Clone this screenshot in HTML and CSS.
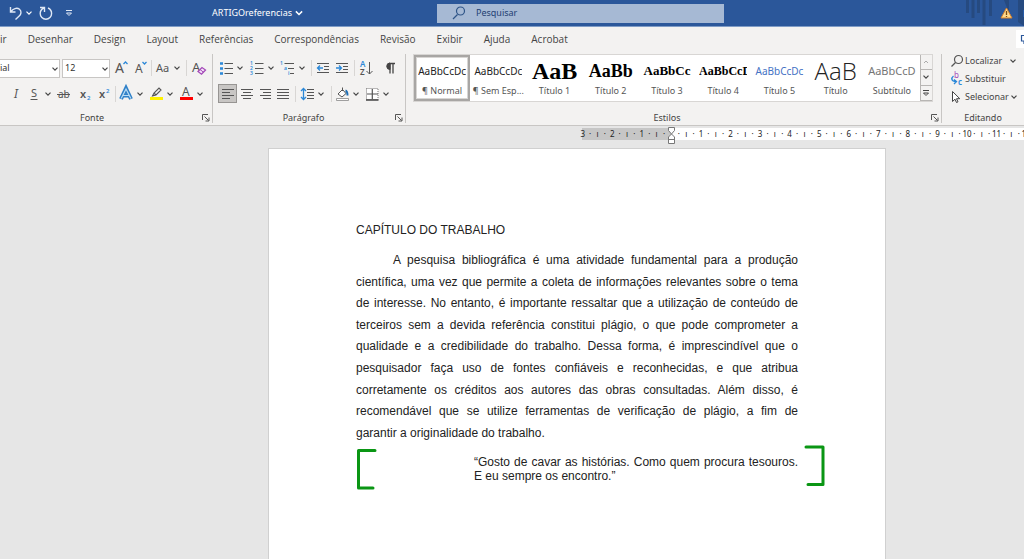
FILE: index.html
```html
<!DOCTYPE html>
<html lang="pt-BR">
<head>
<meta charset="utf-8">
<meta name="viewport" content="width=device-width, initial-scale=1">
<title>ARTIGOreferencias</title>
<link rel="stylesheet" href="styles.css">
</head>
<body>
<svg class="defs" aria-hidden="true">
  <symbol id="chev" viewBox="0 0 8 8"><path d="M1.5 2.7 4 5.2 6.500 2.700" fill="none" stroke="currentColor" stroke-width="1.200"/></symbol>
  <symbol id="launch" viewBox="0 0 8 8"><path d="M.5 6V.5H6M2.500 2.500l4 4M7 3.500V7H3.500" fill="none" stroke="#555"/></symbol>
</svg>

<header class="titlebar">
  <div class="title-left">
    <div class="quick">
      <button class="tbtn" aria-label="Desfazer"><svg width="14" height="16" viewBox="0 0 14 16"><path d="M1.500 2v5h5M1.800 6.800C4 3.500 8 2.300 10.500 4.300c2.500 2.200 1.500 5-.3 6.700L6.500 14.500" fill="none" stroke="#dfe8f5" stroke-width="1.400"/></svg></button>
      <button class="tbtn" aria-label="Opções de desfazer"><svg width="8" height="8"><use href="#chev"/></svg></button>
      <button class="tbtn redo" aria-label="Refazer"><svg width="14" height="16" viewBox="0 0 14 16"><path d="M1 2.500h4.500V7M5 3C2.500 4 1.200 6 1.200 8.500a5.700 5.700 0 0 0 11.400 0C12.600 6 11.300 4 9 3" fill="none" stroke="#dfe8f5" stroke-width="1.400"/></svg></button>
      <button class="tbtn custom" aria-label="Personalizar"><svg width="8" height="8" viewBox="0 0 8 8"><path d="M1 1.500h6M1.500 4 4 6.500 6.500 4z" fill="none" stroke="#dfe8f5"/></svg></button>
    </div>
    <button class="docname">ARTIGOreferencias <svg width="10" height="10"><use href="#chev"/></svg></button>
  </div>
  <label class="search">
    <svg width="14" height="14" viewBox="0 0 14 14"><path d="M1 13 5.500 8.500" stroke="#2f5588" stroke-width="1.300"/><circle cx="8.500" cy="5" r="4" fill="none" stroke="#2f5588" stroke-width="1.200"/></svg>
    <input type="text" placeholder="Pesquisar" aria-label="Pesquisar">
  </label>
  <div class="title-right">
    <svg width="60" height="26" viewBox="0 0 60 26"><path d="M3.500 0v13M9 0v18M14.500 0v13M20 0v25M26.500 0v16" stroke="#264a80" stroke-width="3"/><path d="M40 0h5v13zM54 0h6v26l-6-4z" fill="#264a80"/><path d="M42.500 8 48 18H37z" fill="#ffd98c" stroke="#d9822b"/><path d="M42.500 11v4M42.500 16v1" stroke="#7a4a10" stroke-width="1.300"/></svg>
    <span class="user">F</span>
  </div>
</header>

<nav class="tabs">
  <a href="#" class="cut">ir</a><a href="#">Desenhar</a><a href="#">Design</a><a href="#">Layout</a><a href="#">Referências</a><a href="#">Correspondências</a><a href="#">Revisão</a><a href="#">Exibir</a><a href="#">Ajuda</a><a href="#">Acrobat</a>
  <button class="share" aria-label="Comentários"><svg width="10" height="10" viewBox="0 0 10 10"><path d="M1.500 1.500H10M1.500 1v6h2.500v2.500L6.500 7H10" fill="none" stroke="#2b579a" stroke-width="1.200"/></svg></button>
</nav>

<section class="ribbon">
  <div class="group font">
    <div class="row font-1">
      <span class="combo name"><select aria-label="Fonte"><option>ial</option></select><svg width="8" height="8"><use href="#chev"/></svg></span>
      <span class="combo"><select aria-label="Tamanho da fonte"><option>12</option></select><svg width="8" height="8"><use href="#chev"/></svg></span>
      <button class="c" aria-label="Aumentar fonte"><svg class="i" viewBox="0 0 16 16"><text x="2" y="13" font-size="14">A</text><path d="M10.500 4 12.500 2l2 2" class="b"/></svg></button>
      <button class="c" aria-label="Diminuir fonte"><svg class="i" viewBox="0 0 16 16"><text x="3" y="13" font-size="12">A</text><path d="M10.500 2 12.500 4l2-2" class="b"/></svg></button>
      <i class="sep"></i>
      <button aria-label="Maiúsculas e minúsculas"><svg class="i" viewBox="0 0 16 16"><text x="1" y="12" font-size="11">Aa</text></svg><svg width="8" height="8"><use href="#chev"/></svg></button>
      <i class="sep"></i>
      <button class="c" aria-label="Limpar formatação"><svg class="i" viewBox="0 0 16 16"><text x="1" y="12" font-size="13">A</text><path d="m7 11.500 4-4 3.500 2.500-4 4.200z" fill="#f6e6fa" stroke="#a349b8" stroke-width="1.300"/><path d="m9 9.500 3.500 2.700" stroke="#a349b8"/></svg></button>
    </div>
    <div class="row font-2">
      <button class="c" aria-label="Itálico"><svg class="i" viewBox="0 0 16 16"><text x="5" y="12" font-size="12" class="it">I</text></svg></button>
      <button aria-label="Sublinhado"><svg class="i" viewBox="0 0 16 16"><text x="5" y="11" font-size="11">S</text><path d="M4.500 13.500h7" class="g"/></svg><svg width="8" height="8"><use href="#chev"/></svg></button>
      <button class="c" aria-label="Tachado"><svg class="i" viewBox="0 0 16 16"><text x="2" y="12" font-size="10">ab</text><path d="M1 8.500h13" class="g"/></svg></button>
      <button class="c" aria-label="Subscrito"><svg class="i" viewBox="0 0 16 16"><text x="3" y="12" font-size="11" font-weight="600">x</text><text x="10" y="14" font-size="6" class="bt">2</text></svg></button>
      <button class="c" aria-label="Sobrescrito"><svg class="i" viewBox="0 0 16 16"><text x="3" y="12" font-size="11" font-weight="600">x</text><text x="10" y="7" font-size="6" class="bt">2</text></svg></button>
      <i class="sep"></i>
      <button aria-label="Efeitos de texto"><svg class="i" viewBox="0 0 16 16"><path d="M3 13 8 2.500 13 13M5 9.500h6" fill="none" stroke="#2f80c8" stroke-width="4"/><path d="M3.200 12.500 8 3l4.800 9.500M5 9.500h6" fill="none" stroke="#b8dcf5" stroke-width="1.200"/></svg><svg width="8" height="8"><use href="#chev"/></svg></button>
      <button aria-label="Realce"><svg class="i" viewBox="0 0 16 16"><path d="M2 11h13v3H2z" fill="#fff200"/><path d="M4.500 10 6 7l5-5 2 2-5 5-3.500 1zM6 7l2 2" fill="#f3f2f1" stroke="#555" stroke-width="1.100"/></svg><svg width="8" height="8"><use href="#chev"/></svg></button>
      <button aria-label="Cor da fonte"><svg class="i" viewBox="0 0 16 16"><text x="4" y="10" font-size="12">A</text><path d="M2 11h13v3H2z" fill="#f00"/></svg><svg width="8" height="8"><use href="#chev"/></svg></button>
    </div>
    <div class="caption"><span>Fonte</span><button class="dlg" aria-label="Configurações de fonte"><svg width="8" height="8"><use href="#launch"/></svg></button></div>
  </div>

  <div class="group para">
    <div class="row para-1">
      <button aria-label="Marcadores"><svg class="i" viewBox="0 0 16 16"><path d="M2 3.500h3M2 8.500h3M2 13.500h3" stroke="#2b88d8" stroke-width="2.500"/><path d="M6.500 3.500H15M6.500 8.500H15M6.500 13.500H15" class="g"/></svg><svg width="8" height="8"><use href="#chev"/></svg></button>
      <button aria-label="Numeração"><svg class="i" viewBox="0 0 16 16"><text x="1" y="5" font-size="5" class="bt">1</text><text x="1" y="10" font-size="5" class="bt">2</text><text x="1" y="15" font-size="5" class="bt">3</text><path d="M6 3.500h8.500M6 8.500h8.500M6 13.500h8.500" class="g"/></svg><svg width="8" height="8"><use href="#chev"/></svg></button>
      <button aria-label="Lista de vários níveis"><svg class="i" viewBox="0 0 16 16"><text x="0" y="5" font-size="5" class="bt">1</text><text x="4" y="10" font-size="5" class="bt">a</text><text x="8" y="15" font-size="5" class="bt">i</text><path d="M4.500 3.500H14M8 8.500h6M10 13.500h4" class="g"/></svg><svg width="8" height="8"><use href="#chev"/></svg></button>
      <i class="sep"></i>
      <button class="c" aria-label="Diminuir recuo"><svg class="i" viewBox="0 0 16 16"><path d="M2 3.500h12M9 6.500h5M9 9.500h5M2 12.500h12" class="g"/><path d="M8 8H3M5 5.500 2.500 8 5 10.500" class="b"/></svg></button>
      <button class="c" aria-label="Aumentar recuo"><svg class="i" viewBox="0 0 16 16"><path d="M2 3.500h12M9 6.500h5M9 9.500h5M2 12.500h12" class="g"/><path d="M2 8h5M5 5.500 7.500 8 5 10.500" class="b"/></svg></button>
      <i class="sep"></i>
      <button class="c" aria-label="Classificar"><svg class="i" viewBox="0 0 16 16"><text x="2" y="7" font-size="8" class="bt">A</text><text x="2" y="15" font-size="8" font-weight="600">Z</text><path d="M11.500 2v12M8.500 11l3 3 3-3" class="g"/></svg></button>
      <button class="c" aria-label="Mostrar tudo"><svg class="i" viewBox="0 0 16 16"><path d="M8 3.500h6M9 3.500v10M12 3.500v10" stroke="#444" stroke-width="1.300"/><path d="M9 3v6.500A3.200 3.200 0 0 1 9 3z" fill="#444" stroke="#444"/></svg></button>
    </div>
    <div class="row para-2">
      <button class="c on" aria-label="Alinhar à esquerda"><svg class="i" viewBox="0 0 16 16"><path d="M2 3.500h12M2 6.500h8M2 9.500h12M2 12.500h8" class="g"/></svg></button>
      <button class="c" aria-label="Centralizar"><svg class="i" viewBox="0 0 16 16"><path d="M2 3.500h12M4 6.500h8M2 9.500h12M4 12.500h8" class="g"/></svg></button>
      <button class="c" aria-label="Alinhar à direita"><svg class="i" viewBox="0 0 16 16"><path d="M3 3.500h11M6 6.500h8M3 9.500h11M6 12.500h8" class="g"/></svg></button>
      <button class="c" aria-label="Justificar"><svg class="i" viewBox="0 0 16 16"><path d="M2 3.500h12M2 6.500h12M2 9.500h12M2 12.500h12" class="g"/></svg></button>
      <i class="sep"></i>
      <button aria-label="Espaçamento"><svg class="i" viewBox="0 0 16 16"><path d="M8 3.500h7M8 6.500h7M8 9.500h7M8 12.500h7" class="g"/><path d="M4.500 3v10M2 5l2.500-2.500L7 5M2 11l2.500 2.500L7 11" class="b"/></svg><svg width="8" height="8"><use href="#chev"/></svg></button>
      <i class="sep"></i>
      <button aria-label="Sombreamento"><svg class="i" viewBox="0 0 16 16"><path d="M4 8 8.500 3.500 12 7.500 8 11zM8.500 5V1.500" fill="#fff" stroke="#555"/><path d="M11.500 4.500c1.500.5 2 2 2 5" fill="none" stroke="#1f6fb5" stroke-width="2"/><path d="M2.500 12.500h12v2h-12z" fill="#fff" stroke="#888" stroke-width=".8"/></svg><svg width="8" height="8"><use href="#chev"/></svg></button>
      <button aria-label="Bordas"><svg class="i" viewBox="0 0 16 16"><path d="M2.500 2.500h11.500v11H2.500z" fill="#fff" stroke="#777" stroke-dasharray="1 1"/><path d="M8.300 3v10M3 8h11" stroke="#555" stroke-width="1.200"/><path d="M2 14h12.500" stroke="#444" stroke-width="1.500"/></svg><svg width="8" height="8"><use href="#chev"/></svg></button>
    </div>
    <div class="caption"><span>Parágrafo</span><button class="dlg" aria-label="Configurações de parágrafo"><svg width="8" height="8"><use href="#launch"/></svg></button></div>
  </div>

  <div class="group styles">
    <div class="gallery">
      <button class="style sel"><span class="pv">AaBbCcDc</span><span>¶ Normal</span></button>
      <button class="style"><span class="pv">AaBbCcDc</span><span>¶ Sem Esp...</span></button>
      <button class="style"><span class="pv t1">AaB</span><span>Título 1</span></button>
      <button class="style"><span class="pv t2">AaBb</span><span>Título 2</span></button>
      <button class="style"><span class="pv t3">AaBbCc</span><span>Título 3</span></button>
      <button class="style"><span class="pv t4">AaBbCcD</span><span>Título 4</span></button>
      <button class="style"><span class="pv t5">AaBbCcDc</span><span>Título 5</span></button>
      <button class="style"><span class="pv tt">AaB</span><span>Título</span></button>
      <button class="style"><span class="pv st">AaBbCcD</span><span>Subtítulo</span></button>
      <div class="pager">
        <button class="off" aria-label="Linha anterior"><svg width="8" height="8" viewBox="0 0 8 8"><path d="M2 5l2-2 2 2" fill="none" stroke="currentColor"/></svg></button>
        <button aria-label="Próxima linha"><svg width="8" height="8"><use href="#chev"/></svg></button>
        <button aria-label="Mais estilos"><svg width="8" height="8" viewBox="0 0 8 8"><path d="M1 1.500h6M1.500 4 4 6.500 6.500 4z" fill="none" stroke="currentColor"/></svg></button>
      </div>
    </div>
    <div class="caption"><span>Estilos</span><button class="dlg" aria-label="Painel de estilos"><svg width="8" height="8"><use href="#launch"/></svg></button></div>
  </div>

  <div class="group edit">
    <div class="cmds">
      <button><svg width="14" height="14" viewBox="0 0 14 14"><path d="M1.500 12.500 5.500 8.500" stroke="#555" stroke-width="1.300"/><circle cx="8.500" cy="5.500" r="4" fill="none" stroke="#555" stroke-width="1.200"/></svg><span>Localizar</span><svg class="far" width="8" height="8"><use href="#chev"/></svg></button>
      <button><svg width="14" height="14" viewBox="0 0 14 14"><text x="4" y="6" font-size="8" fill="#a349b8">b</text><text x="8" y="13" font-size="8" class="bt">c</text><path d="M3.500 4C1 6 1 9.500 6 9.500M4 7.500l2.500 2L4 12" class="b"/></svg><span>Substituir</span></button>
      <button><svg width="14" height="14" viewBox="0 0 14 14"><path d="M2.500 1.500v10L5 9.200 6.500 12.500l1.500-.7L6.500 8.700h3.300z" fill="#fff" stroke="#444"/></svg><span>Selecionar</span><svg width="8" height="8"><use href="#chev"/></svg></button>
    </div>
    <div class="caption"><span>Editando</span></div>
  </div>
</section>

<main class="workspace">
  <div class="ruler">
    <div class="ticks">
      <i>3</i><i>·</i><i>ı</i><i>·</i><i>2</i><i>·</i><i>ı</i><i>·</i><i>1</i><i>·</i><i>ı</i><i>·</i><i></i><i>·</i><i>ı</i><i>·</i><i>1</i><i>·</i><i>ı</i><i>·</i><i>2</i><i>·</i><i>ı</i><i>·</i><i>3</i><i>·</i><i>ı</i><i>·</i><i>4</i><i>·</i><i>ı</i><i>·</i><i>5</i><i>·</i><i>ı</i><i>·</i><i>6</i><i>·</i><i>ı</i><i>·</i><i>7</i><i>·</i><i>ı</i><i>·</i><i>8</i><i>·</i><i>ı</i><i>·</i><i>9</i><i>·</i><i>ı</i><i>·</i><i>10</i><i>·</i><i>ı</i><i>·</i><i>11</i><i>·</i><i>ı</i><i>·</i><i>12</i>
    </div>
    <svg class="indent" width="9" height="18" viewBox="0 0 9 18"><path d="M1.500.5h6v3l-3 3.500 3 3v6.500h-6V10l3-3-3-3.500zM1.500 12.500h6" fill="#fff" stroke="#777"/></svg>
  </div>
  <article class="page">
    <h1>CAPÍTULO DO TRABALHO</h1>
    <p class="body">A pesquisa bibliográfica é uma atividade fundamental para a produção científica, uma vez que permite a coleta de informações relevantes sobre o tema de interesse. No entanto, é importante ressaltar que a utilização de conteúdo de terceiros sem a devida referência constitui plágio, o que pode comprometer a qualidade e a credibilidade do trabalho. Dessa forma, é imprescindível que o pesquisador faça uso de fontes confiáveis e reconhecidas, e que atribua corretamente os créditos aos autores das obras consultadas. Além disso, é recomendável que se utilize ferramentas de verificação de plágio, a fim de garantir&nbsp;a&nbsp;originalidade do trabalho.</p>
    <div class="quote">
      <svg class="mark left" width="21" height="42" viewBox="0 0 21 42"><path d="M19 2.500H2.500V40H17" fill="none" stroke="#0a9614" stroke-width="3" stroke-linecap="round" stroke-linejoin="round"/></svg>
      <blockquote><span>“Gosto de cavar as histórias. Como quem procura tesouros.</span> E eu sempre os encontro.”</blockquote>
      <svg class="mark right" width="21" height="42" viewBox="0 0 21 42"><path d="M2 2h17v37.500H4" fill="none" stroke="#0a9614" stroke-width="3" stroke-linecap="round" stroke-linejoin="round"/></svg>
    </div>
  </article>
</main>
</body>
</html>
```
FILE: styles.css
```css
* { box-sizing: border-box; }
body {
  margin: 0;
  min-height: 100vh;
  display: flex;
  flex-direction: column;
  overflow: hidden;
  background: #e6e6e6;
  color: #444;
  font: 9px/14px "Noto Sans", "Open Sans", sans-serif;
}
button, select, input { font: inherit; color: inherit; border: 0; background: none; padding: 0; margin: 0; }
button { display: flex; align-items: center; }
svg { display: block; flex: none; }
.defs { position: absolute; width: 0; height: 0; }

/* Title bar */
.titlebar {
  display: grid;
  grid-template-columns: 437fr 287fr 300fr;
  align-items: center;
  height: 27px;
  background: #2b579a;
  border-bottom: 1px solid #7f9cc6;
  color: #fff;
}
.title-left { display: flex; justify-content: space-between; padding: 0 133px 0 9px; }
.quick { display: flex; align-items: center; }
.tbtn:nth-child(2) { margin-left: 2px; }
.redo { margin-left: 6px; }
.custom { margin-left: 12px; }
.docname { gap: 2px; color: #fff; }
.search {
  display: flex;
  align-items: center;
  gap: 10px;
  height: 19px;
  padding-left: 15px;
  background: #a6b9d4;
}
.search input { flex: 1; min-width: 0; outline: 0; }
.search input::placeholder { color: #1e3f73; opacity: 1; }
.title-right { display: flex; justify-content: flex-end; position: relative; overflow: hidden; }
.user { position: absolute; right: -4px; top: 7px; }

/* Tabs */
.tabs {
  display: flex;
  align-items: center;
  gap: 21px;
  height: 23px;
  background: #f3f2f1;
  font-family: "Open Sans", sans-serif;
  font-size: 10px;
}
.tabs a { color: #444; text-decoration: none; white-space: nowrap; }
.share { margin-left: auto; height: 18px; width: 8px; padding-left: 4px; background: #fff; overflow: hidden; }

/* Ribbon */
.ribbon {
  display: flex;
  height: 76px;
  padding-top: 4px;
  background: #f3f2f1;
  border-bottom: 1px solid #c8c6c4;
}
.group { display: flex; flex-direction: column; border-right: 1px solid #c8c6c4; margin-bottom: 2px; }
.font { flex: 0 0 213px; }
.para { flex: 0 0 193px; padding-left: 5px; }
.styles { flex: 1; min-width: 0; padding-left: 7px; }
.edit { flex: 0 0 82px; border: 0; }
.row { display: grid; height: 28px; align-items: center; justify-content: start; }
.row + .row { height: 23px; }
.font-1 { grid-template-columns: 62px 48px 21px 17px 7px 27px 8px 17px; }
.font-2 { grid-template-columns: 19px 27px 22px 20px 17px 6px 30px 30px 27px; padding-left: 7px; }
.para-1 { grid-template-columns: 31px 31px 28px 6px 18px 19px 7px 16px 30px; }
.para-2 { grid-template-columns: 19px 19px 18px 18px 7px 29px 6px 30px 30px; }
.row button { gap: 2px; height: 19px; min-width: 0; }
.row .c { justify-content: center; }
.row .on { background: #c8c6c4; border: 1px solid #979593; }
.sep { justify-self: center; width: 1px; height: 16px; background: #d8d6d4; }
.i { width: 16px; height: 16px; overflow: visible; }
.i text { fill: #555; }
.i .bt, .cmds .bt { fill: #2b88d8; font-weight: 600; }
.it { font-style: italic; }
.g { stroke: #555; fill: none; }
.b { stroke: #2b88d8; fill: none; stroke-width: 1.3; }
.combo { position: relative; display: block; height: 19px; background: #fff; border: 1px solid #c8c6c4; }
.combo.name { margin-right: 2px; border-left: 0; }
.combo select { width: 100%; height: 17px; padding-left: 2px; appearance: none; color: #333; }
.combo.name select { padding-left: 0; }
.combo svg { position: absolute; right: 0; top: 5px; pointer-events: none; }
.caption { display: flex; align-items: center; height: 10px; line-height: 10px; margin-top: auto; }
.caption span { flex: 1; text-align: center; }
.font .caption span { padding-right: 18px; }
.para .caption span { padding-right: 6px; }
.styles .caption span { padding-right: 10px; }
.dlg { width: 10px; }

/* Style gallery */
.gallery {
  display: grid;
  grid-template-columns: repeat(9, 1fr) 12px;
  height: 48px;
  margin-right: 8px;
  background: #fff;
  border: 1px solid #d8d6d4;
}
.style { flex-direction: column; min-width: 0; padding: 3px 4px; overflow: hidden; white-space: nowrap; }
.sel { border: 2px solid #a8a6a4; outline: 1px solid #d8d6d4; outline-offset: -3px; padding: 1px 2px; }
.pv {
  display: block;
  width: 100%;
  height: 26px;
  line-height: 26px;
  font-size: 10px;
  overflow: hidden;
  color: #222;
}
.style span:last-child { color: #555; }
.t1, .t2, .t3, .t4 { font-family: "Liberation Serif", serif; font-weight: 700; color: #000; }
.pv.t1 { font-size: 24px; }
.pv.t2 { font-size: 18px; }
.pv.t3 { font-size: 13px; }
.pv.t4 { font-size: 12px; }
.pv.t5 { color: #4472c4; }
.pv.tt { font-family: "Open Sans", sans-serif; font-size: 24px; font-weight: 300; }
.pv.st { font-size: 11px; color: #767676; }
.pager { display: grid; grid-template-rows: repeat(3, 1fr); background: #f3f2f1; }
.pager button { justify-content: center; border: 1px solid #b8b6b4; border-width: 0 0 1px 1px; }
.pager .off { color: #aaa; }

.cmds { display: grid; grid-auto-rows: 18px; margin-top: -2px; padding-left: 8px; }
.cmds svg { overflow: visible; }
.cmds button { gap: 1px; white-space: nowrap; }
.cmds .far { margin-left: 6px; }

/* Ruler and page */
.workspace { flex: 1; display: flex; flex-direction: column; padding-top: 2px; }
.ruler {
  position: relative;
  height: 12px;
  margin-left: 582px;
  background: linear-gradient(to right, #c6c6c6 89px, #fff 89px);
}
.ticks { display: flex; margin: 0 -6px 0 -3px; }
.ticks i { flex: 1 0 0; min-width: 0; display: flex; justify-content: center; font: 8px/12px "Noto Sans", sans-serif; color: #222; }
.indent { position: absolute; left: 85px; top: -1px; }
.page {
  flex: 1;
  width: 618px;
  max-width: 100%;
  margin: 8px 0 0 268px;
  padding: 74px 87px 0;
  background: #fff;
  border: 1px solid #d0d0d0;
  border-bottom: 0;
  color: #222;
  font: 12px/14px "Liberation Sans", Arial, sans-serif;
}
.page h1 { margin: 0; font: inherit; }
.body { margin: 13px 0 0; line-height: 1.8; text-align: justify; text-indent: 37px; }
.quote { position: relative; margin-top: 11px; padding-left: 118px; }
.quote blockquote { margin: 0; }
.quote span { display: block; text-align-last: justify; }
.mark { position: absolute; }
.left { left: 0; top: -7px; }
.right { right: -27px; top: -10px; }
```
